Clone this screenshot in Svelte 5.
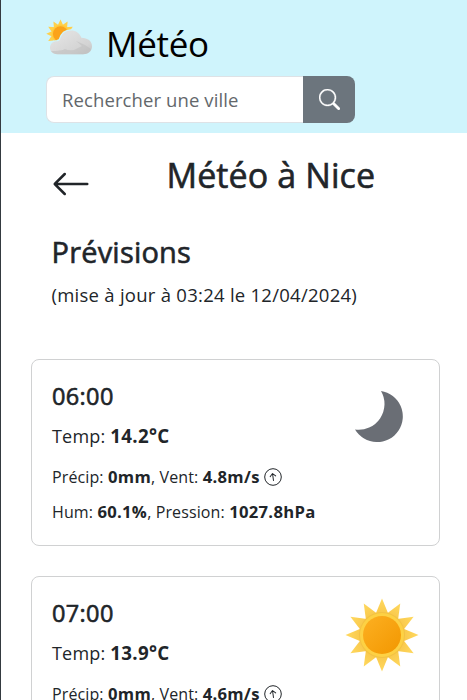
<script>
  const forecasts = [
    { time: '06:00', temp: '14.2°C', rain: '0mm', wind: '4.8m/s', angle: -8, hum: '60.1%', pressure: '1027.8hPa', icon: 'moon' },
    { time: '07:00', temp: '13.9°C', rain: '0mm', wind: '4.6m/s', angle: -8, icon: 'sun' }
  ];
  const rays = Array.from({ length: 12 }, (_, i) => i * 30);
</script>

<div class="page">
  <header>
    <div class="brand">
      <svg class="logo" width="48" height="38" viewBox="0 0 48 38">
        <defs>
          <linearGradient id="cloud" x1="0" y1="0" x2="1" y2="1">
            <stop offset="0.3" stop-color="#dfdfdf" />
            <stop offset="0.75" stop-color="#d3d3d3" />
            <stop offset="1" stop-color="#c2c2c2" />
          </linearGradient>
        </defs>
        <g transform="translate(14.5 14.8)">
          {#each rays as r}
            <path d="M0-14.2 3.4-7H-3.4Z" fill="#ffd04b" transform="rotate({r})" />
          {/each}
          <circle r="9" fill="#ffca3e" />
          <circle r="7.6" fill="#fba31a" />
        </g>
        <path d="M11.5 35.2C7 35.2 4 32.4 4 28.7c0-3.8 3-6.5 6.8-6.5 1.2-.1 2.2-.4 3-1.3C15.6 14.5 20 11.5 25 11.5c5 0 8.8 2.7 10.4 7.3C41.7 18.9 46 22.2 46 27.2c0 4.8-3.6 8-8.5 8Z" fill="none" stroke="#cff4fc" stroke-width="2.6" />
        <path d="M11.5 35.2C7 35.2 4 32.4 4 28.7c0-3.8 3-6.5 6.8-6.5 1.2-.1 2.2-.4 3-1.3C15.6 14.5 20 11.5 25 11.5c5 0 8.8 2.7 10.4 7.3C41.7 18.9 46 22.2 46 27.2c0 4.8-3.6 8-8.5 8Z" fill="url(#cloud)" />
        <path d="M5 32q10 0 14-2 4 2 9 1l8-4-6-5 9 4 6 4q-2 5-8 5.2H11.5Q7 35 5 32Z" fill="#bdbdbd" opacity=".55" />
      </svg>
      <span class="name">Météo</span>
    </div>
    <form class="search">
      <input type="text" placeholder="Rechercher une ville" />
      <button type="button" aria-label="Rechercher">
        <svg width="21" height="21" viewBox="0 0 16 16" fill="#fff" stroke="#fff" stroke-width=".25">
          <path d="M11.742 10.344a6.5 6.5 0 1 0-1.397 1.398h-.001q.044.06.098.115l3.85 3.85a1 1 0 0 0 1.415-1.414l-3.85-3.85a1 1 0 0 0-.115-.1zM12 6.5a5.5 5.5 0 1 1-11 0 5.5 5.5 0 0 1 11 0" />
        </svg>
      </button>
    </form>
  </header>

  <main>
    <div class="title">
      <svg width="40" height="40" viewBox="0 0 16 16" fill="#212529">
        <path fill-rule="evenodd" d="M15 8a.5.5 0 0 0-.5-.5H2.707l3.147-3.146a.5.5 0 1 0-.708-.708l-4 4a.5.5 0 0 0 0 .708l4 4a.5.5 0 0 0 .708-.708L2.707 8.5H14.5A.5.5 0 0 0 15 8" />
      </svg>
      <h1>Météo à Nice</h1>
    </div>
    <h2>Prévisions</h2>
    <p class="updated">(mise à jour à 03:24 le 12/04/2024)</p>

    <div class="cards">
      {#each forecasts as f}
        <article>
          <div class="info">
            <h3>{f.time}</h3>
            <p class="temp">Temp: <b>{f.temp}</b></p>
            <p class="line wind">
              <span>Précip: <b>{f.rain}</b>, Vent: <b>{f.wind}</b></span>
              <svg width="18" height="18" viewBox="0 0 18 18" fill="none" stroke="#212529">
                <circle cx="9" cy="9" r="8.3" />
                <path d="M9 12.5V5.7M6.2 8.3 9 5.5l2.8 2.8" stroke-linecap="round" stroke-linejoin="round" transform="rotate({f.angle} 9 9)" />
              </svg>
            </p>
            {#if f.hum}
              <p class="line hum">Hum: <b>{f.hum}</b>, Pression: <b>{f.pressure}</b></p>
            {/if}
          </div>
          <svg class="weather" width="76" height="76" viewBox="-38 -38 76 76">
            {#if f.icon === 'moon'}
              <path d="M-1-27A25.7 25.7 0 1 1-27 11.5 25.8 25.8 0 0 0-1-27Z" fill="#6a6e75" />
            {:else}
              <defs>
                <linearGradient id="core" x1="0" y1="0" x2="1" y2="1">
                  <stop offset="0" stop-color="#fdb022" />
                  <stop offset="1" stop-color="#f29700" />
                </linearGradient>
                <linearGradient id="ray" x1="0" y1="0" x2="0" y2="1">
                  <stop offset="0" stop-color="#ffd95f" />
                  <stop offset="1" stop-color="#f9c84b" />
                </linearGradient>
              </defs>
              {#each rays as r}
                <path d="M0-36.5 6.4-21H-6.4Z" fill="url(#ray)" transform="rotate({r})" />
              {/each}
              <circle r="23" fill="#f3c243" />
              <circle r="22" fill="#fdd144" />
              <circle r="19" fill="url(#core)" />
            {/if}
          </svg>
        </article>
      {/each}
    </div>
  </main>
</div>

<style>
  :global(body) {
    margin: 0;
    overflow: hidden;
  }
  .page {
    box-sizing: border-box;
    height: 700px;
    overflow: hidden;
    border-left: 1px solid #343a40;
    background: #fff;
    color: #212529;
    font-family: 'Open Sans', 'Noto Sans', sans-serif;
    white-space: nowrap;
  }
  h1, h2, h3, p {
    margin: 0;
    font-weight: 500;
  }
  h1, h2, h3 {
    -webkit-text-stroke: 0.6px #212529;
  }
  header {
    box-sizing: border-box;
    height: 133px;
    padding: 20px 45px 0;
    background: #cff4fc;
  }
  .brand {
    display: flex;
    height: 48px;
  }
  .logo {
    flex: none;
    margin-top: -1px;
  }
  .name {
    margin-left: 12px;
    color: #000;
    font-size: 35px;
    line-height: 48px;
    letter-spacing: -0.3px;
  }
  .search {
    display: flex;
    width: 309px;
    height: 47px;
    margin-top: 8px;
  }
  input {
    box-sizing: border-box;
    width: 257px;
    padding: 0 15px;
    border: 1px solid #dee2e6;
    border-right: 0;
    border-radius: 8px 0 0 8px;
    background: #fff;
    font: 400 18.5px 'Open Sans', 'Noto Sans', sans-serif;
    letter-spacing: 0.1px;
  }
  input::placeholder {
    color: #63676b;
    opacity: 1;
  }
  button {
    display: flex;
    flex: 1;
    align-items: center;
    justify-content: center;
    padding: 0;
    border: 0;
    border-radius: 0 8px 8px 0;
    background: #6c757d;
  }
  .title {
    display: flex;
    height: 82px;
    padding: 19px 0 0 50px;
  }
  .title svg {
    flex: none;
    margin-top: 12px;
  }
  h1 {
    margin-left: 75.5px;
    font-size: 34px;
    line-height: 46px;
    letter-spacing: 0.1px;
  }
  h2 {
    padding-left: 50.5px;
    font-size: 29px;
    line-height: 36px;
    letter-spacing: 0.2px;
  }
  .updated {
    margin: 10px 0 0 50.5px;
    font-size: 18.5px;
    font-weight: 400;
    line-height: 30px;
    letter-spacing: 0.26px;
  }
  .cards {
    display: flex;
    flex-direction: column;
    gap: 30px;
    margin: 49px 27px 0 30px;
  }
  article {
    box-sizing: border-box;
    display: flex;
    flex: none;
    justify-content: space-between;
    height: 187px;
    padding: 20px 19px 19px 20px;
    border: 1px solid #d0d1d2;
    border-radius: 8px;
  }
  .weather {
    flex: none;
  }
  h3 {
    font-size: 23.5px;
    line-height: 32px;
    letter-spacing: 0.35px;
  }
  .temp {
    margin-top: 9px;
    font-size: 18px;
    font-weight: 400;
    line-height: 30px;
    letter-spacing: 0.2px;
  }
  .line {
    font-size: 16px;
    font-weight: 400;
    line-height: 28px;
    letter-spacing: 0.12px;
  }
  .wind {
    display: flex;
    align-items: center;
    gap: 4.5px;
    height: 28px;
    margin-top: 12px;
  }
  .hum {
    margin-top: 7px;
  }
  b {
    font-size: 1.04em;
    font-weight: 700;
    letter-spacing: 0.3px;
  }
</style>
